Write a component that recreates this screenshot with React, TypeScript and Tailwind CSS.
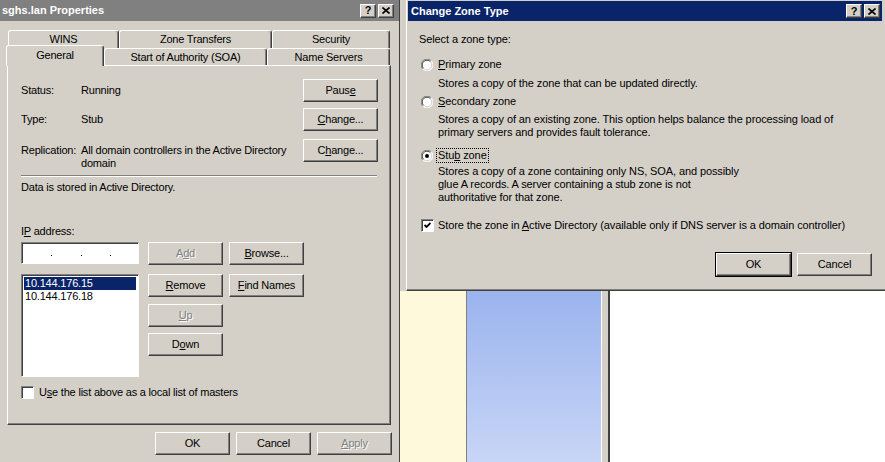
import React from "react";

const raised =
  "border border-t-white border-l-white border-r-[#404040] border-b-[#404040] shadow-[inset_-1px_-1px_0_#808080]";
const sunken =
  "border border-t-[#808080] border-l-[#808080] border-r-white border-b-white shadow-[inset_1px_1px_0_#404040]";
const dimText = "text-[#808080] [text-shadow:1px_1px_0_#fff]";

function Btn({
  children,
  disabled,
  className = "",
}: {
  children: React.ReactNode;
  disabled?: boolean;
  className?: string;
}) {
  return (
    <div
      className={`w-[75px] h-[23px] shrink-0 flex items-center justify-center bg-[#d4d0c8] ${raised} ${
        disabled ? dimText : "text-black"
      } ${className}`}
    >
      <span>{children}</span>
    </div>
  );
}

function CapBtn({ kind }: { kind: "help" | "close" }) {
  return (
    <div className={`w-[16px] h-[14px] bg-[#d4d0c8] flex items-center justify-center ${raised}`}>
      {kind === "help" ? (
        <span className="text-[11px] font-bold leading-none text-black">?</span>
      ) : (
        <svg width="8" height="7" viewBox="0 0 8 7">
          <path d="M0.5 0.5 L7.5 6.5 M7.5 0.5 L0.5 6.5" stroke="#000" strokeWidth="1.6" />
        </svg>
      )}
    </div>
  );
}

function Tab({
  w,
  selected,
  children,
}: {
  w: number;
  selected?: boolean;
  children: React.ReactNode;
}) {
  return (
    <div
      style={{ width: w }}
      className={`shrink-0 bg-[#d4d0c8] rounded-t-[3px] border-t border-l border-r border-t-white border-l-white border-r-[#404040] shadow-[inset_-1px_0_0_#808080] flex justify-center ${
        selected ? "h-[21px] mb-[-1px] relative z-10 pt-[3px]" : "h-full pt-[2px]"
      }`}
    >
      {children}
    </div>
  );
}

function Radio({ checked }: { checked?: boolean }) {
  return (
    <svg width="12" height="12" viewBox="0 0 12 12" className="shrink-0">
      <circle cx="6" cy="6" r="5.5" fill="#fff" />
      <path d="M1.8 10.2 A5.5 5.5 0 0 1 10.2 1.8" stroke="#808080" fill="none" />
      <path d="M2.6 9.4 A4.5 4.5 0 0 1 9.4 2.6" stroke="#404040" fill="none" />
      <path d="M10.2 1.8 A5.5 5.5 0 0 1 1.8 10.2" stroke="#fff" fill="none" />
      <path d="M9.4 2.6 A4.5 4.5 0 0 1 2.6 9.4" stroke="#d4d0c8" fill="none" />
      {checked && <circle cx="6" cy="6" r="2" fill="#000" />}
    </svg>
  );
}

function Check({ checked }: { checked?: boolean }) {
  return (
    <div className={`w-[13px] h-[13px] shrink-0 bg-white ${sunken} flex items-center justify-center`}>
      {checked && (
        <svg width="7" height="7" viewBox="0 0 7 7">
          <path d="M0.5 3 L2.5 5 L6.5 1" stroke="#000" strokeWidth="1.8" fill="none" />
        </svg>
      )}
    </div>
  );
}

function PropertiesWindow() {
  return (
    <div className="w-[400px] h-full bg-[#d4d0c8] border-r border-r-[#404040] flex flex-col text-[11px] leading-[13px] tracking-[-0.2px]">
      <div className="h-[21px] bg-[#808080] flex items-center pl-[2px] pr-[5px] shrink-0 tracking-normal">
        <span className="flex-1 text-white font-bold">sghs.lan Properties</span>
        <div className="flex gap-[2px]">
          <CapBtn kind="help" />
          <CapBtn kind="close" />
        </div>
      </div>

      <div className="mt-[9px] flex h-[18px] pl-[8px]">
        <Tab w={111}>WINS</Tab>
        <Tab w={153}>Zone Transfers</Tab>
        <Tab w={118}>Security</Tab>
      </div>
      <div className="flex h-[17px] items-end pl-[6px]">
        <Tab w={98} selected>
          General
        </Tab>
        <Tab w={163}>Start of Authority (SOA)</Tab>
        <Tab w={123}>Name Servers</Tab>
      </div>

      <div className="ml-[7px] w-[384px] h-[360px] shrink-0 flex flex-col pl-[13px] pr-[12px] pt-[13px] border border-t-white border-l-white border-r-[#404040] border-b-[#404040] shadow-[inset_-1px_-1px_0_#808080]">
        <div className="flex items-center h-[23px]">
          <span className="w-[60px]">Status:</span>
          <span>Running</span>
          <Btn className="ml-auto">
            Paus<u>e</u>
          </Btn>
        </div>
        <div className="flex items-center h-[23px] mt-[6px]">
          <span className="w-[60px]">Type:</span>
          <span>Stub</span>
          <Btn className="ml-auto">
            <u>C</u>hange...
          </Btn>
        </div>
        <div className="flex items-start h-[23px] mt-[8px]">
          <span className="w-[60px] pt-[5px]">Replication:</span>
          <span className="pt-[5px]">
            All domain controllers in the Active Directory
            <br />
            domain
          </span>
          <Btn className="ml-auto">
            C<u>h</u>ange...
          </Btn>
        </div>
        <div className="mt-[13px] mr-[1px] h-[2px] border-t border-t-[#808080] border-b border-b-white" />
        <div className="mt-[4px]">Data is stored in Active Directory.</div>

        <div className="mt-[31px]">
          I<u>P</u> address:
        </div>
        <div className="mt-[4px] flex items-start h-[23px]">
          <div className={`w-[118px] h-[22px] bg-white ${sunken} flex items-start pt-[12px]`}>
            <div className="w-[1px] h-[1px] bg-black ml-[29px]" />
            <div className="w-[1px] h-[1px] bg-black ml-[29px]" />
            <div className="w-[1px] h-[1px] bg-black ml-[28px]" />
          </div>
          <Btn disabled className="ml-[9px]">
            A<u>d</u>d
          </Btn>
          <Btn className="ml-[6px]">
            <u>B</u>rowse...
          </Btn>
        </div>

        <div className="mt-[9px] flex items-start">
          <div className={`w-[118px] h-[103px] bg-white ${sunken} p-[2px] flex flex-col`}>
            <div className="h-[13px] bg-[#0a246a] text-white pl-[1px]">10.144.176.15</div>
            <div className="h-[13px] pl-[1px]">10.144.176.18</div>
          </div>
          <div className="ml-[9px] flex flex-col">
            <Btn>
              <u>R</u>emove
            </Btn>
            <Btn disabled className="mt-[7px]">
              <u>U</u>p
            </Btn>
            <Btn className="mt-[6px]">
              D<u>o</u>wn
            </Btn>
          </div>
          <Btn className="ml-[6px]">
            <u>F</u>ind Names
          </Btn>
        </div>

        <div className="mt-[9px] flex items-center gap-[5px]">
          <Check />
          <span>
            U<u>s</u>e the list above as a local list of masters
          </span>
        </div>
      </div>

      <div className="mt-[7px] flex gap-[6px] pl-[155px]">
        <Btn>OK</Btn>
        <Btn>Cancel</Btn>
        <Btn disabled>
          <u>A</u>pply
        </Btn>
      </div>
    </div>
  );
}

function ChangeZoneDialog() {
  return (
    <div className="h-[291px] shrink-0 bg-[#d4d0c8] pl-[6px] flex text-[11px] leading-[13px] tracking-[-0.1px]">
      <div className="flex-1 flex flex-col border-l border-l-white border-b border-b-[#404040] shadow-[inset_0_-1px_0_#808080] pl-[1px] pt-[1px] pr-[3px]">
        <div className="h-[20px] bg-[#0a246a] flex items-center pl-[3px] pr-[2px] shrink-0 tracking-normal">
          <span className="flex-1 text-white font-bold">Change Zone Type</span>
          <div className="flex gap-[2px]">
            <CapBtn kind="help" />
            <CapBtn kind="close" />
          </div>
        </div>

        <div className="flex flex-col pl-[11px]">
          <div className="mt-[12px]">Select a zone type:</div>

          <div className="mt-[12px] flex items-center gap-[5px] pl-[2px] h-[13px]">
            <Radio />
            <span>
              <u>P</u>rimary zone
            </span>
          </div>
          <div className="mt-[6px] pl-[19px]">Stores a copy of the zone that can be updated directly.</div>

          <div className="mt-[5px] flex items-center gap-[5px] pl-[2px] h-[13px]">
            <Radio />
            <span>
              <u>S</u>econdary zone
            </span>
          </div>
          <div className="mt-[5px] pl-[19px]">
            Stores a copy of an existing zone. This option helps balance the processing load of
            <br />
            primary servers and provides fault tolerance.
          </div>

          <div className="mt-[10px] flex items-center gap-[4px] pl-[2px] h-[13px]">
            <Radio checked />
            <span className="outline outline-1 outline-dotted outline-black px-[1px]">
              Stu<u>b</u> zone
            </span>
          </div>
          <div className="mt-[3px] pl-[19px]">
            Stores a copy of a zone containing only NS, SOA, and possibly
            <br />
            glue A records. A server containing a stub zone is not
            <br />
            authoritative for that zone.
          </div>

          <div className="mt-[15px] flex items-center gap-[4px] pl-[2px] h-[13px]">
            <Check checked />
            <span>
              Store the zone in <u>A</u>ctive Directory (available only if DNS server is a domain controller)
            </span>
          </div>

          <div className="mt-[20px] flex justify-end pr-[10px] gap-[5px]">
            <div className="border border-black">
              <Btn className="w-[72px]">OK</Btn>
            </div>
            <div className="pt-[1px]">
              <Btn className="w-[74px]">Cancel</Btn>
            </div>
          </div>
        </div>
      </div>
    </div>
  );
}

export default function App() {
  return (
    <div className="w-[885px] h-[462px] overflow-hidden flex bg-[#d4d0c8] font-['Liberation_Sans',Arial,sans-serif] text-black">
      <PropertiesWindow />
      <div className="w-[485px] h-full flex flex-col">
        <ChangeZoneDialog />
        <div className="flex-1 flex">
          <div className="w-[67px] bg-[#fff9dc] border-r border-r-[#808080]" />
          <div className="w-[135px] bg-gradient-to-b from-[#9bb4ee] to-[#c8d5f6] border-r border-r-white" />
          <div className="w-[6px] bg-[#d4d0c8]" />
          <div className="w-[2px] bg-[#404040]" />
          <div className="flex-1 bg-white" />
        </div>
      </div>
    </div>
  );
}
